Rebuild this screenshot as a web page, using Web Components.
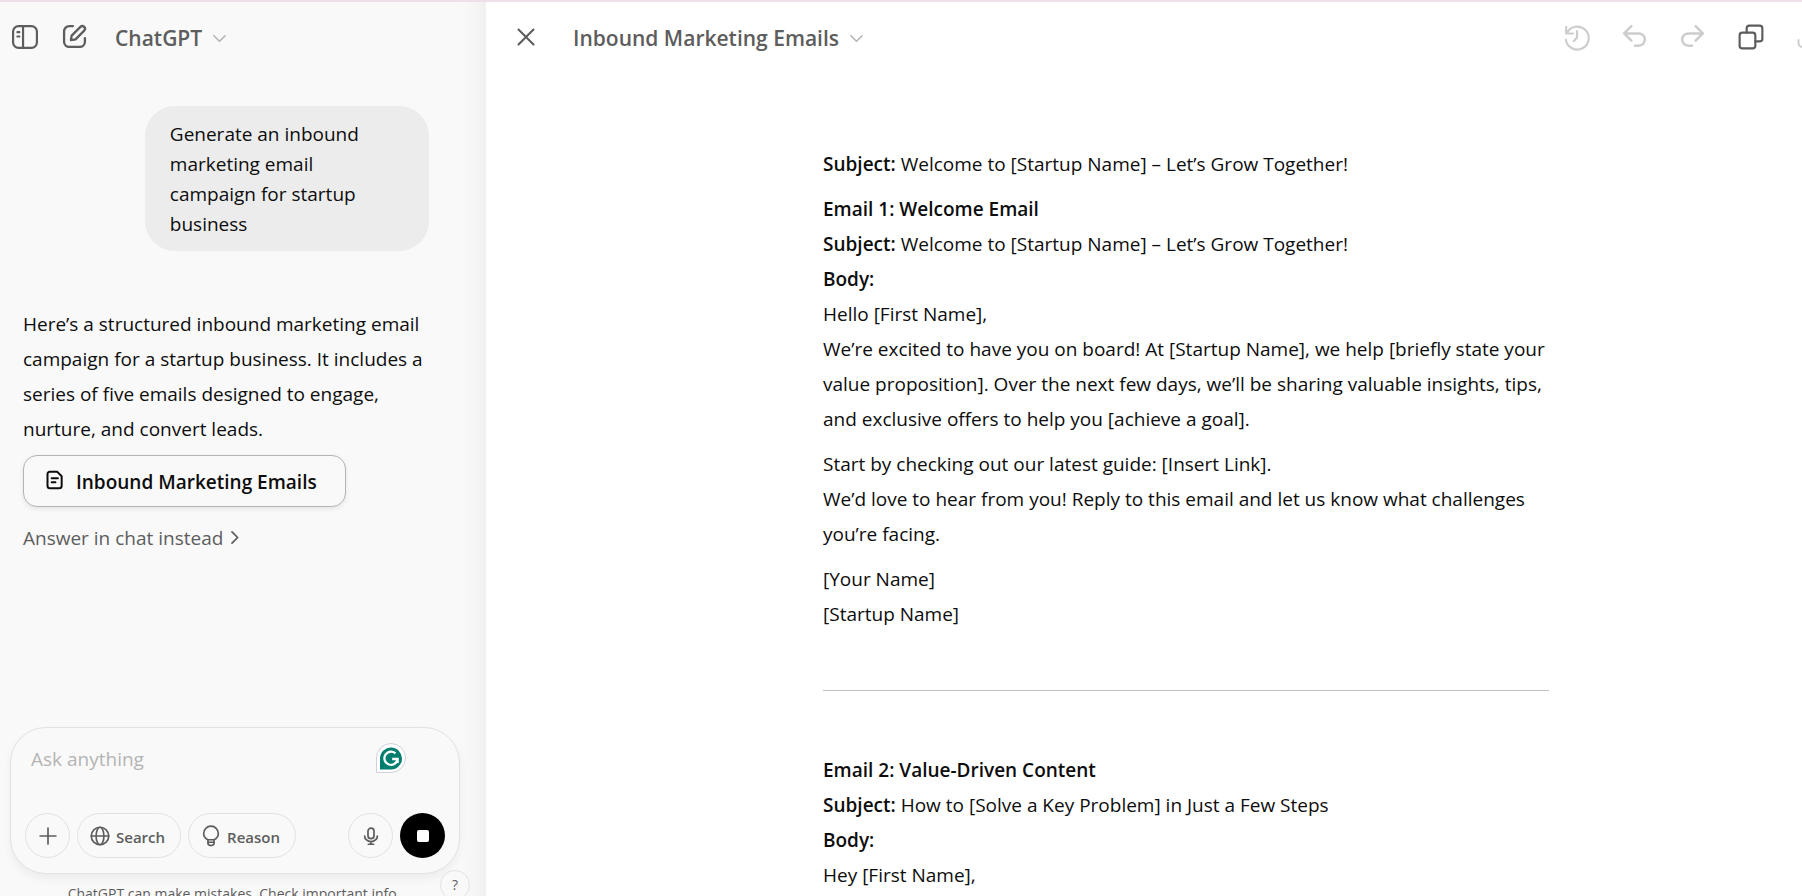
<!DOCTYPE html>
<html lang="en">
<head>
<meta charset="utf-8">
<meta name="viewport" content="width=device-width, initial-scale=1">
<title>ChatGPT - Inbound Marketing Emails</title>
<style>
  body {
    margin: 0;
    font: 19px/35px "Segoe UI", "Open Sans", "Noto Sans", sans-serif;
    color: #0d0d0d;
    --muted: #5d5d5d;
    --faint: #b4b4b4;
    --line: #e2e2e2;
  }
  p { margin: 0 0 10px; }
  strong { font-weight: 600; }
  hr { margin: 58px 0 62px; border: 0; border-top: 1px solid #bfbfbf; }
</style>
</head>
<body>
<app-shell>
  <chat-panel slot="side">
    <chat-message from="user">Generate an inbound marketing email campaign for startup business</chat-message>
    <chat-message from="assistant">Here’s a structured inbound marketing email campaign for a startup business. It includes a series of five emails designed to engage, nurture, and convert leads.</chat-message>
    <canvas-link>Inbound Marketing Emails</canvas-link>
    <more-link>Answer in chat instead</more-link>
  </chat-panel>
  <canvas-panel heading="Inbound Marketing Emails">
    <p><strong>Subject:</strong> Welcome to [Startup Name] – Let’s Grow Together!</p>
    <p><strong>Email 1: Welcome Email</strong><br>
      <strong>Subject:</strong> Welcome to [Startup Name] – Let’s Grow Together!<br>
      <strong>Body:</strong><br>
      Hello [First Name],<br>
      We’re excited to have you on board! At [Startup Name], we help [briefly state your value proposition]. Over the next few days, we’ll be sharing valuable insights, tips, and exclusive offers to help you [achieve a goal].</p>
    <p>Start by checking out our latest guide: [Insert Link].<br>
      We’d love to hear from you! Reply to this email and let us know what challenges you’re facing.</p>
    <p>[Your Name]<br>[Startup Name]</p>
    <hr>
    <p><strong>Email 2: Value-Driven Content</strong><br>
      <strong>Subject:</strong> How to [Solve a Key Problem] in Just a Few Steps<br>
      <strong>Body:</strong><br>
      Hey [First Name],</p>
  </canvas-panel>
</app-shell>

<script>
// 24x24 line icons, drawn with currentColor
const ICONS = {
  sidebar: '<rect x="1" y="2" width="22" height="20" rx="5"/><path d="M10.2 2v20M5 7.500h1.800M5 11.500h1.800"/>',
  compose: '<path d="M10.500 2H7a5 5 0 0 0-5 5v10a5 5 0 0 0 5 5h10a5 5 0 0 0 5-5v-3.500"/><path d="M8.500 15.500l.8-4.400 8.400-8.300a2.500 2.500 0 0 1 3.600 3.600L13 14.800z"/>',
  chevronDown: '<path d="M3 7.500l9 9 9-9"/>',
  chevronRight: '<path d="M8 3l9 9-9 9"/>',
  close: '<path d="M3 3l18 18M21 3L3 21"/>',
  history: '<path d="M2 2.500v6.300h6.300M2.600 8.500A10.600 10.600 0 1 1 1.700 14.500M12 6.500v6l-3 3.400"/>',
  undo: '<path d="M9 2L2 9l7 7M2.500 9H16a5.900 5.900 0 0 1 0 11.800h-3.500"/>',
  redo: '<path d="M15 2l7 7-7 7M21.500 9H8a5.900 5.900 0 0 0 0 11.800h3.500"/>',
  copy: '<rect x="1.500" y="8" width="14.500" height="14.500" rx="2.500"/><path d="M8 8V4a2.500 2.500 0 0 1 2.500-2.500H20A2.500 2.500 0 0 1 22.500 4v9.500A2.500 2.500 0 0 1 20 16h-4"/>',
  share: '<path d="M12 15V2M7 7l5-5 5 5M1.500 15v3a4 4 0 0 0 4 4h13a4 4 0 0 0 4-4v-3"/>',
  doc: '<path d="M6 2h8.500L20 7.500V19a3 3 0 0 1-3 3H6a3 3 0 0 1-3-3V5a3 3 0 0 1 3-3zM8 10h7.500M8 14.800h4.500"/>',
  plus: '<path d="M12 2.500v19M2.500 12h19"/>',
  globe: '<circle cx="12" cy="12" r="10.500"/><ellipse cx="12" cy="12" rx="4.700" ry="10.500"/><path d="M1.500 12h21"/>',
  bulb: '<path d="M8.300 16.500C5 14.800 3.200 12 3.200 9a8.800 8.800 0 0 1 17.600 0c0 3-1.800 5.800-5.100 7.500zM8.300 16.500v4a3.700 3 0 0 0 7.400 0v-4M8.500 19.500h7"/>',
  mic: '<rect x="8" y="1.500" width="8" height="14" rx="4"/><path d="M3.500 12a8.500 7.500 0 0 0 17 0M12 19.500V23M8.500 23h7"/>',
  stop: '<rect x="4" y="4" width="16" height="16" rx="2" fill="currentColor"/>'
};

class UiIcon extends HTMLElement {
  connectedCallback() {
    const size = this.getAttribute('size') || 24;
    const stroke = this.getAttribute('stroke') || 2;
    this.attachShadow({ mode: 'open' }).innerHTML = `
      <style>
        :host { display: inline-flex; flex: none; }
        svg { display: block; overflow: visible; }
      </style>
      <svg width="${size}" height="${size}" viewBox="0 0 24 24" fill="none" stroke="currentColor"
        stroke-width="${stroke}" stroke-linecap="round" stroke-linejoin="round" aria-hidden="true">${ICONS[this.getAttribute('name')]}</svg>
    `;
  }
}

// Button that holds an icon, a text or both. kind: plain, ring, pill, solid
class UiButton extends HTMLElement {
  connectedCallback() {
    const label = this.getAttribute('label');
    this.attachShadow({ mode: 'open' }).innerHTML = `
      <style>
        :host { display: block; flex: none; color: var(--muted); }
        button {
          display: flex;
          align-items: center;
          justify-content: center;
          gap: 6px;
          box-sizing: border-box;
          min-width: 45px;
          height: 45px;
          margin: 0;
          padding: 0;
          border: 0;
          border-radius: 23px;
          background: none;
          font: inherit;
          color: inherit;
          white-space: nowrap;
          cursor: pointer;
        }
        :host([kind="ring"]) button, :host([kind="pill"]) button { border: 1px solid var(--line); }
        :host([kind="pill"]) button { padding: 0 15px 0 12px; font-size: 15px; font-weight: 600; line-height: 20px; }
        :host([kind="pill"]) ::slotted(span) { padding-top: 2px; }
        :host([kind="solid"]) button { background: #000; color: #fff; }
        :host([kind="title"]) button { padding-top: 4px; font-size: 21px; font-weight: 600; gap: 10px; }
        :host([kind="faint"]) { color: #cdcdcd; }
      </style>
      <button type="button" ${label ? `aria-label="${label}"` : ''}><slot></slot></button>
    `;
  }
}

class AppShell extends HTMLElement {
  constructor() {
    super();
    this.attachShadow({ mode: 'open' }).innerHTML = `
      <style>
        :host {
          display: flex;
          box-sizing: border-box;
          height: 100vh;
          overflow: hidden;
          border-top: 2px solid #f0dfe8;
        }
        ::slotted(chat-panel) { flex: 0 0 486px; min-width: 0; }
        ::slotted(canvas-panel) { flex: 1; min-width: 0; }
      </style>
      <slot name="side"></slot>
      <slot></slot>
    `;
  }
}

class ChatPanel extends HTMLElement {
  constructor() {
    super();
    this.attachShadow({ mode: 'open' }).innerHTML = `
      <style>
        :host {
          display: flex;
          flex-direction: column;
          box-sizing: border-box;
          background: linear-gradient(to left, #efefef, #f5f5f5 8px, #f9f9f9 26px);
        }
        header { display: flex; align-items: center; gap: 5px; padding: 12px 2px 0; }
        header ui-button:last-child { margin-left: 13px; }
        main {
          display: flex;
          flex: 1;
          flex-direction: column;
          align-items: flex-start;
          min-height: 0;
          padding: 47px 57px 0 23px;
        }
        chat-composer { margin: 0 26px 0 10px; }
        footer { position: relative; height: 22px; text-align: center; }
        small {
          display: block;
          height: 22px;
          box-sizing: border-box;
          padding: 10px 18px 0 0;
          overflow: hidden;
          font-size: 14px;
          line-height: 20px;
          color: var(--muted);
        }
        .help {
          position: absolute;
          right: 16px;
          top: -4px;
          box-sizing: border-box;
          width: 30px;
          height: 30px;
          padding: 0;
          border: 1px solid var(--line);
          border-radius: 50%;
          background: #f9f9f9;
          font: inherit;
          font-size: 14px;
          line-height: 28px;
          color: var(--muted);
        }
      </style>
      <header>
        <ui-button label="Close sidebar"><ui-icon name="sidebar" size="26"></ui-icon></ui-button>
        <ui-button label="New chat"><ui-icon name="compose" size="25" stroke="2.2"></ui-icon></ui-button>
        <ui-button kind="title">ChatGPT <ui-icon name="chevronDown" size="15" stroke="2.5" style="color: var(--faint)"></ui-icon></ui-button>
      </header>
      <main><slot></slot></main>
      <chat-composer></chat-composer>
      <footer>
        <small>ChatGPT can make mistakes. Check important info.</small>
        <button class="help" type="button" aria-label="Help">?</button>
      </footer>
    `;
  }
}

class ChatMessage extends HTMLElement {
  constructor() {
    super();
    this.attachShadow({ mode: 'open' }).innerHTML = `
      <style>
        :host { display: block; }
        :host([from="user"]) {
          align-self: flex-end;
          box-sizing: border-box;
          width: 70%;
          padding: 13px 30px 12px 25px;
          margin-bottom: 56px;
          border-radius: 30px;
          background: #ececec;
          line-height: 30px;
        }
        :host([from="assistant"]) { margin-bottom: 8px; }
      </style>
      <slot></slot>
    `;
  }
}

class CanvasLink extends HTMLElement {
  constructor() {
    super();
    this.attachShadow({ mode: 'open' }).innerHTML = `
      <style>
        :host { display: block; }
        button {
          display: flex;
          align-items: center;
          gap: 11px;
          box-sizing: border-box;
          height: 52px;
          padding: 2px 28px 0 21px;
          border: 1px solid #b4b4b4;
          border-radius: 14px;
          background: #f9f9f9;
          box-shadow: 0 2px 5px rgba(0, 0, 0, .08);
          font: inherit;
          font-weight: 600;
          color: #0d0d0d;
          white-space: nowrap;
        }
        ui-icon { padding-bottom: 4px; }
      </style>
      <button type="button"><ui-icon name="doc" size="20" stroke="2.4"></ui-icon><slot></slot></button>
    `;
  }
}

class MoreLink extends HTMLElement {
  constructor() {
    super();
    this.attachShadow({ mode: 'open' }).innerHTML = `
      <style>
        :host { display: block; margin-top: 14px; }
        a { display: flex; align-items: center; gap: 4px; color: var(--muted); text-decoration: none; }
        ui-icon { padding-bottom: 3px; }
      </style>
      <a href="#"><slot></slot> <ui-icon name="chevronRight" size="15" stroke="2.8"></ui-icon></a>
    `;
  }
}

class ChatComposer extends HTMLElement {
  constructor() {
    super();
    this.attachShadow({ mode: 'open' }).innerHTML = `
      <style>
        :host {
          display: block;
          border: 1px solid var(--line);
          border-radius: 36px;
          background: #f9f9f9;
          box-shadow: 0 5px 10px rgba(0, 0, 0, .05);
        }
        .field { display: flex; align-items: flex-start; padding: 15px 53px 0 20px; }
        input {
          flex: 1;
          min-width: 0;
          height: 33px;
          padding: 0;
          border: 0;
          outline: 0;
          background: none;
          font: inherit;
        }
        input::placeholder { color: var(--faint); opacity: 1; }
        .tools { display: flex; gap: 7px; padding: 37px 14px 15px; }
        .space { flex: 1; }
      </style>
      <div class="field">
        <input type="text" placeholder="Ask anything" aria-label="Ask anything">
        <svg width="30" height="30" viewBox="0 0 30 30" aria-hidden="true">
          <path d="M.5 29.500V15A14.500 14.500 0 1 1 15 29.500z" fill="#fff" stroke="#d0d0dc"/>
          <path d="M4 26.500V15a11 11 0 1 1 11 11.500z" fill="#027e6f"/>
          <path d="M19.500 10.400A6.600 6.600 0 1 0 21.600 16H16.200M21.600 16v4" fill="none" stroke="#fff" stroke-width="2.300"/>
        </svg>
      </div>
      <div class="tools">
        <ui-button kind="ring" label="Attach"><ui-icon name="plus" size="20"></ui-icon></ui-button>
        <ui-button kind="pill"><ui-icon name="globe" size="20"></ui-icon><span>Search</span></ui-button>
        <ui-button kind="pill"><ui-icon name="bulb" size="20"></ui-icon><span>Reason</span></ui-button>
        <div class="space"></div>
        <ui-button kind="ring" label="Dictate"><ui-icon name="mic" size="18" stroke="2.300"></ui-icon></ui-button>
        <ui-button kind="solid" label="Stop"><ui-icon name="stop" size="16" stroke="2"></ui-icon></ui-button>
      </div>
    `;
  }
}

class CanvasPanel extends HTMLElement {
  connectedCallback() {
    this.attachShadow({ mode: 'open' }).innerHTML = `
      <style>
        :host { display: flex; flex-direction: column; overflow: hidden; background: #fff; }
        header { display: flex; align-items: center; padding: 12px 0 0 17px; }
        header > ui-button:first-child { margin-right: 25px; }
        /* the toolbar runs on past the right edge of the panel */
        .actions { display: flex; gap: 13px; margin: 0 -29px 0 auto; }
        article { width: 726px; max-width: 100%; margin: 88px auto 0; padding-left: 84px; }
      </style>
      <header>
        <ui-button label="Close"><ui-icon name="close" size="20" stroke="2.500"></ui-icon></ui-button>
        <ui-button kind="title">${this.getAttribute('heading')} <ui-icon name="chevronDown" size="15" stroke="2.500" style="color: var(--faint)"></ui-icon></ui-button>
        <div class="actions">
          <ui-button kind="faint" label="Version history"><ui-icon name="history" size="26"></ui-icon></ui-button>
          <ui-button kind="faint" label="Undo"><ui-icon name="undo" size="25" stroke="2.400"></ui-icon></ui-button>
          <ui-button kind="faint" label="Redo"><ui-icon name="redo" size="25" stroke="2.400"></ui-icon></ui-button>
          <ui-button label="Copy"><ui-icon name="copy" size="26"></ui-icon></ui-button>
          <ui-button kind="faint" label="Share"><ui-icon name="share" size="24"></ui-icon></ui-button>
        </div>
      </header>
      <article><slot></slot></article>
    `;
  }
}

customElements.define('ui-icon', UiIcon);
customElements.define('ui-button', UiButton);
customElements.define('chat-message', ChatMessage);
customElements.define('canvas-link', CanvasLink);
customElements.define('more-link', MoreLink);
customElements.define('chat-composer', ChatComposer);
customElements.define('chat-panel', ChatPanel);
customElements.define('canvas-panel', CanvasPanel);
customElements.define('app-shell', AppShell);
</script>
</body>
</html>
